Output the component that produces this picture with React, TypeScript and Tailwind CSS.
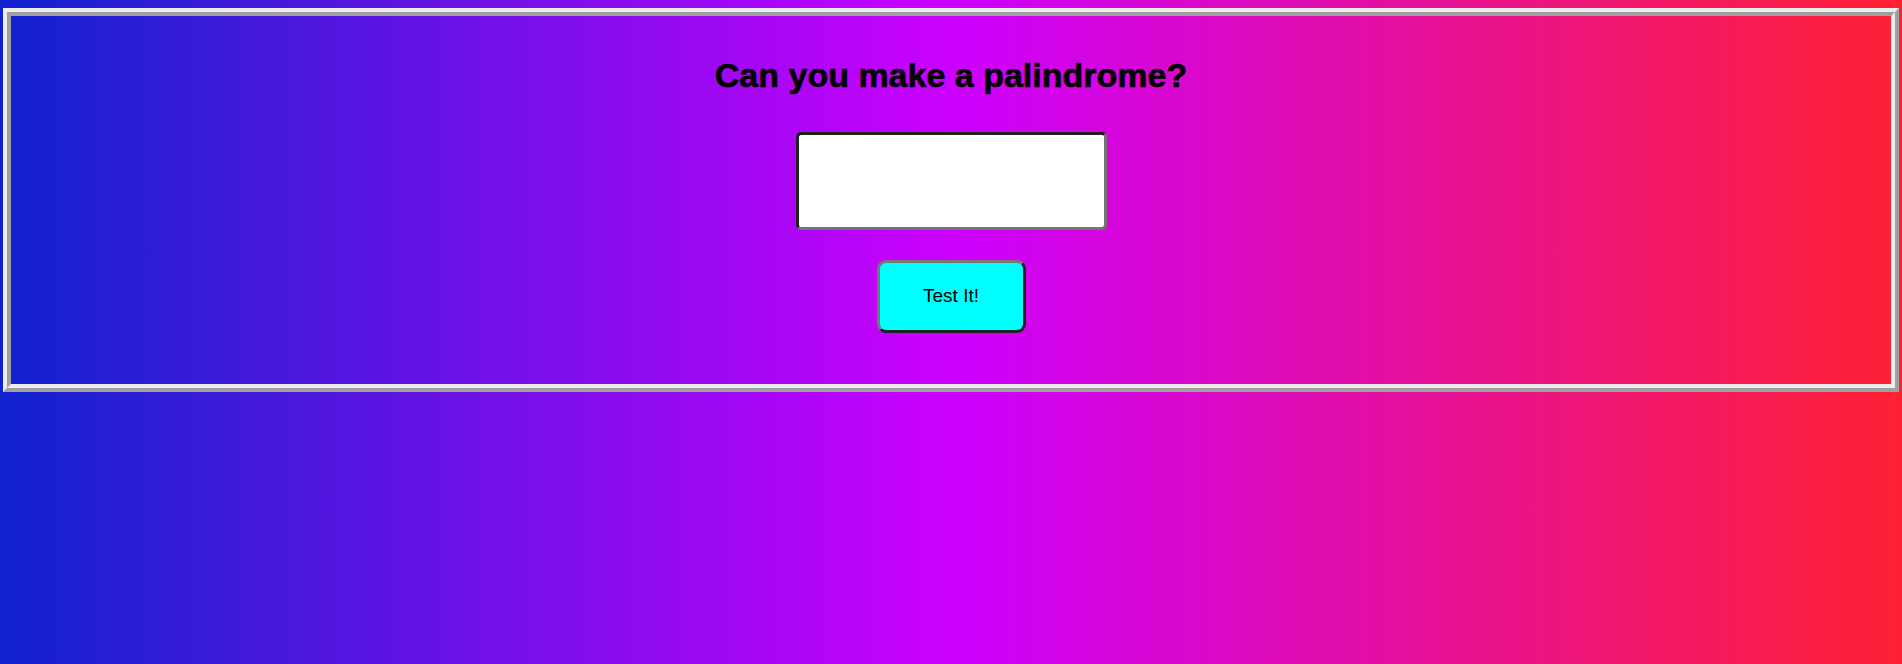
const App = () => {
  return (
    <div className="min-h-screen w-full bg-[linear-gradient(to_right,#1022cf,#cc00ff,#ff2133)] pt-2 px-[3px] font-['Liberation_Sans',Arial,sans-serif]">
      {/* ridge frame: outer light/dark, inner dark/light */}
      <div className="border-4 border-t-[#ededed] border-l-[#ededed] border-r-[#a0a0a0] border-b-[#a0a0a0]">
        <div className="border-4 border-t-[#a0a0a0] border-l-[#a0a0a0] border-r-[#ededed] border-b-[#ededed] h-[376px] flex flex-col items-center">
          <h1 className="mt-[39px] text-[34px] leading-[40px] font-bold text-black [-webkit-text-stroke:0.6px_black]">
            Can you make a palindrome?
          </h1>
          <input
            type="text"
            className="mt-[37px] w-[311px] h-[98px] bg-white rounded-[5px] border-[3px] border-t-[#202020] border-l-[#202020] border-r-[#737373] border-b-[#737373] outline-none"
          />
          <button className="mt-[30px] w-[149px] h-[73px] bg-[#00ffff] rounded-[9px] border-[3px] border-t-[#777777] border-l-[#777777] border-r-[#202020] border-b-[#202020] text-[19px] text-black">
            Test It!
          </button>
        </div>
      </div>
    </div>
  );
};

export default App;
